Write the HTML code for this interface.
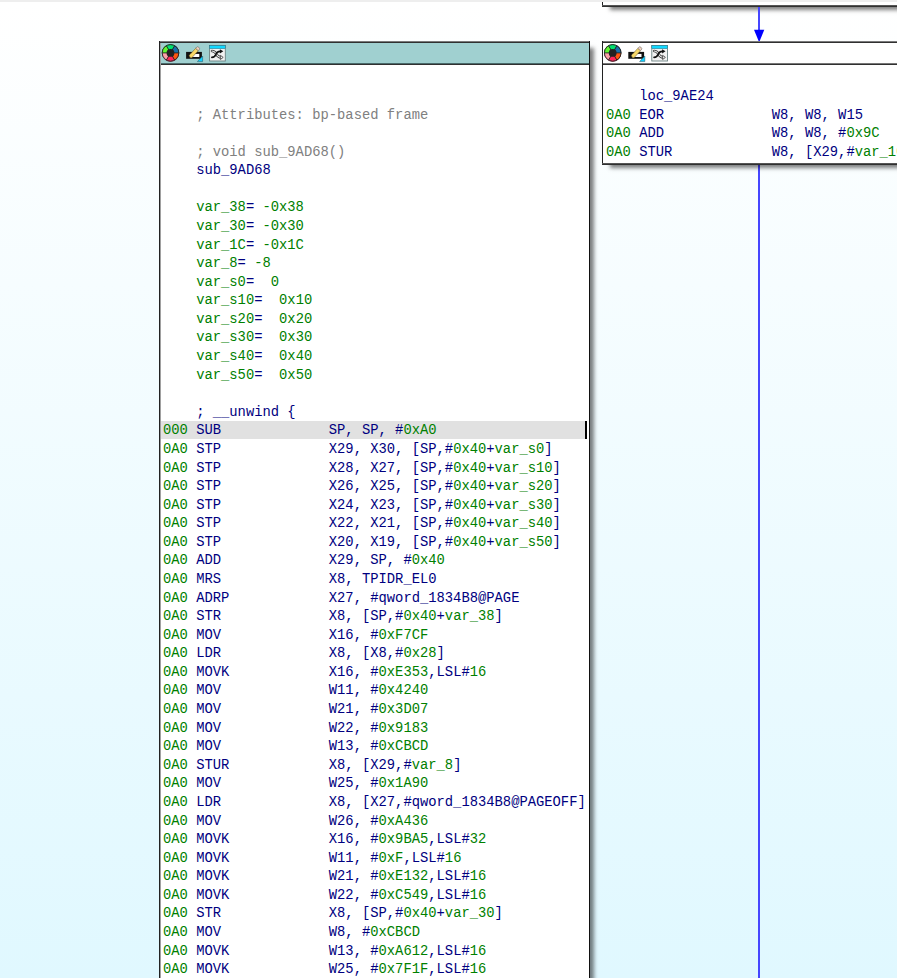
<!DOCTYPE html>
<html><head><meta charset="utf-8">
<style>
html,body{margin:0;padding:0;}
body{width:897px;height:978px;overflow:hidden;position:relative;
 background:linear-gradient(to bottom,#ffffff 0px,#ffffff 2px,#e0f8ff 978px);
 font-family:"Liberation Mono",monospace;}
#strip{position:absolute;left:0;top:0;width:897px;height:2px;background:#eeeeee;z-index:10;}
.box{position:absolute;background:#fff;box-shadow:5.5px 4.5px 4px -2px rgba(0,0,0,0.5);}
.bt{position:absolute;left:0;right:0;top:0;height:1px;background:#7a7a7a;}
.bt2{position:absolute;left:0;right:0;top:1px;height:1px;background:#303030;}
.bl{position:absolute;left:0;top:0;bottom:0;width:1px;background:#222;}
.br{position:absolute;right:0;top:0;bottom:0;width:1px;background:#111;}
.bb{position:absolute;left:0;right:0;bottom:1px;height:1px;background:#555;}
.bb2{position:absolute;left:0;right:0;bottom:0;height:1px;background:#303030;}
.hdr{position:absolute;left:1px;top:2px;right:1px;height:20px;}
.hb{position:absolute;left:0;right:0;top:22px;height:1px;}
.hb2{position:absolute;left:0;right:0;top:23px;height:1px;background:#303030;}
.hdr svg{position:absolute;left:-1px;top:-2px;}
pre{margin:0;position:absolute;font-family:"Liberation Mono",monospace;font-size:13.82px;line-height:18.58px;color:#000080;white-space:pre;}
.g{color:#008000}
.c{color:#808080}
.line{position:absolute;background:#4646ff;}
</style></head><body>
<div id="strip"></div>

<svg width="0" height="0" style="position:absolute">
 <defs>
  <g id="icons">
   <!-- colour wheel -->
   <g transform="translate(11.5,11.9)">
    <circle r="8.7" fill="#222"/>
    <path d="M0 0 L-4.2 -7.3 A8.4 8.4 0 0 1 4.2 -7.3 Z" fill="#00e070"/>
    <path d="M0 0 L4.2 -7.3 A8.4 8.4 0 0 1 8.4 0 Z" fill="#1670a8"/>
    <path d="M0 0 L8.4 0 A8.4 8.4 0 0 1 4.2 7.3 Z" fill="#ff5510"/>
    <path d="M0 0 L4.2 7.3 A8.4 8.4 0 0 1 -4.2 7.3 Z" fill="#ff2458"/>
    <path d="M0 0 L-4.2 7.3 A8.4 8.4 0 0 1 -8.4 0 Z" fill="#ffa0a8"/>
    <path d="M0 0 L-8.4 0 A8.4 8.4 0 0 1 -4.2 -7.3 Z" fill="#60f830"/>
    <path d="M-8.4 0 L8.4 0 M-4.2 -7.3 L4.2 7.3 M4.2 -7.3 L-4.2 7.3" stroke="#222" stroke-width="0.9"/>
    <circle r="8.3" fill="none" stroke="#222" stroke-width="0.9"/>
    <circle r="3.9" fill="#222"/>
   </g>
   <!-- pencil / rename -->
   <path d="M27.1 10.9 H42.9 V17.8 H27.1 Z" fill="#111"/>
   <path d="M31 12.9 H40.3 V16.0 H31 Z" fill="#fff"/>
   <path d="M38.4 20.6 L43.6 20.6 L43.6 15.0 Z" fill="#10d0ff" stroke="#205060" stroke-width="0.5"/>
   <path d="M30.1 14.4 L36.7 7.3 L39.3 9.7 L32.8 16.8 Q31 17.6 30.1 14.4 Z" fill="#f8d868" stroke="#5a4a20" stroke-width="0.5"/>
   <path d="M36.7 7.3 L38.2 5.7 Q39.8 5.4 40.8 7.9 L39.3 9.7 Z" fill="#f2d0c0" stroke="#5a5a50" stroke-width="0.5"/>
   <!-- shuffle -->
   <rect x="50.6" y="4.5" width="15.7" height="15.5" fill="#f2f2f2" stroke="#6a8080" stroke-width="0.9"/>
   <rect x="50.6" y="4.5" width="15.7" height="3.2" fill="#10d8ff" stroke="#307080" stroke-width="0.5"/>
   <path d="M53 10 C55.3 10 56 10.9 57 12.6 C58 14.5 59.2 16.4 62 16.4" fill="none" stroke="#3a3a3a" stroke-width="2.5" stroke-linecap="round"/>
   <path d="M53 10 C55.3 10 56 10.9 57 12.6 C58 14.5 59.2 16.4 62 16.4" fill="none" stroke="#f6f6f6" stroke-width="1.1" stroke-linecap="round"/>
   <path d="M61.4 14.3 L64.2 16.4 L61.4 18.5 Z" fill="#f6f6f6" stroke="#3a3a3a" stroke-width="0.8"/>
   <path d="M52.9 16.3 C54.9 16.3 55.9 16 56.7 13.8 C57.5 11.4 58.6 10.3 61.2 10.3" fill="none" stroke="#111" stroke-width="1.8" stroke-linecap="round"/>
   <path d="M60.9 8.2 L64.3 10.3 L60.9 12.5 Z" fill="#111"/>
  </g>
 </defs>
</svg>

<!-- top partial box -->
<div class="box" style="left:602px;top:-40px;width:400px;height:47px;">
 <div class="bl"></div><div class="bb"></div><div class="bb2"></div>
</div>

<!-- arrow -->
<div class="line" style="left:758px;top:7px;width:2px;height:25px;"></div>
<svg style="position:absolute;left:750px;top:28px" width="20" height="16"><path d="M4 1.7 L14.3 1.7 L9.15 14.2 Z" fill="#0000ff"/></svg>
<div class="line" style="left:758px;top:165px;width:2px;height:820px;"></div>

<!-- main box -->
<div class="box" style="left:159px;top:41px;width:431px;height:1000px;">
 <div class="hdr" style="background:#a0d0d0;border-top:0;"><svg width="80" height="24"><use href="#icons"/></svg></div>
 <div class="hb" style="background:#4a6a6a"></div><div class="hb2"></div>
 <div class="bt"></div><div class="bt2"></div><div class="bl"></div><div class="br"></div>
 <div style="position:absolute;left:1px;top:2px;bottom:0;width:1px;background:#a0a0a0"></div>
</div>

<!-- second box -->
<div class="box" style="left:602px;top:41px;width:400px;height:124px;">
 <div class="hdr" style="background:#ffffff;"><svg width="80" height="24"><use href="#icons" transform="translate(-0.8,0)"/></svg></div>
 <div class="hb" style="background:#777"></div><div class="hb2"></div>
 <div class="bt"></div><div class="bt2"></div><div class="bl"></div><div class="bb"></div><div class="bb2"></div>
</div>

<div style="position:absolute;left:161px;top:421px;width:424px;height:18px;background:#e1e1e1;"></div>
<div style="position:absolute;left:585px;top:421px;width:2px;height:18px;background:#000;"></div>

<pre id="main" style="left:163px;top:68.4px;">


    <span class="c">; Attributes: bp-based frame</span>

    <span class="c">; void sub_9AD68()</span>
    sub_9AD68

    <span class="g">var_38</span>= <span class="g">-0x38</span>
    <span class="g">var_30</span>= <span class="g">-0x30</span>
    <span class="g">var_1C</span>= <span class="g">-0x1C</span>
    <span class="g">var_8</span>= <span class="g">-8</span>
    <span class="g">var_s0</span>=  <span class="g">0</span>
    <span class="g">var_s10</span>=  <span class="g">0x10</span>
    <span class="g">var_s20</span>=  <span class="g">0x20</span>
    <span class="g">var_s30</span>=  <span class="g">0x30</span>
    <span class="g">var_s40</span>=  <span class="g">0x40</span>
    <span class="g">var_s50</span>=  <span class="g">0x50</span>

    ; __unwind {
<span class="g">000</span> SUB             SP, SP, #<span class="g">0xA0</span>
<span class="g">0A0</span> STP             X29, X30, [SP,#<span class="g">0x40</span>+<span class="g">var_s0</span>]
<span class="g">0A0</span> STP             X28, X27, [SP,#<span class="g">0x40</span>+<span class="g">var_s10</span>]
<span class="g">0A0</span> STP             X26, X25, [SP,#<span class="g">0x40</span>+<span class="g">var_s20</span>]
<span class="g">0A0</span> STP             X24, X23, [SP,#<span class="g">0x40</span>+<span class="g">var_s30</span>]
<span class="g">0A0</span> STP             X22, X21, [SP,#<span class="g">0x40</span>+<span class="g">var_s40</span>]
<span class="g">0A0</span> STP             X20, X19, [SP,#<span class="g">0x40</span>+<span class="g">var_s50</span>]
<span class="g">0A0</span> ADD             X29, SP, #<span class="g">0x40</span>
<span class="g">0A0</span> MRS             X8, TPIDR_EL0
<span class="g">0A0</span> ADRP            X27, #qword_1834B8@PAGE
<span class="g">0A0</span> STR             X8, [SP,#<span class="g">0x40</span>+<span class="g">var_38</span>]
<span class="g">0A0</span> MOV             X16, #<span class="g">0xF7CF</span>
<span class="g">0A0</span> LDR             X8, [X8,#<span class="g">0x28</span>]
<span class="g">0A0</span> MOVK            X16, #<span class="g">0xE353</span>,LSL#<span class="g">16</span>
<span class="g">0A0</span> MOV             W11, #<span class="g">0x4240</span>
<span class="g">0A0</span> MOV             W21, #<span class="g">0x3D07</span>
<span class="g">0A0</span> MOV             W22, #<span class="g">0x9183</span>
<span class="g">0A0</span> MOV             W13, #<span class="g">0xCBCD</span>
<span class="g">0A0</span> STUR            X8, [X29,#<span class="g">var_8</span>]
<span class="g">0A0</span> MOV             W25, #<span class="g">0x1A90</span>
<span class="g">0A0</span> LDR             X8, [X27,#qword_1834B8@PAGEOFF]
<span class="g">0A0</span> MOV             W26, #<span class="g">0xA436</span>
<span class="g">0A0</span> MOVK            X16, #<span class="g">0x9BA5</span>,LSL#<span class="g">32</span>
<span class="g">0A0</span> MOVK            W11, #<span class="g">0xF</span>,LSL#<span class="g">16</span>
<span class="g">0A0</span> MOVK            W21, #<span class="g">0xE132</span>,LSL#<span class="g">16</span>
<span class="g">0A0</span> MOVK            W22, #<span class="g">0xC549</span>,LSL#<span class="g">16</span>
<span class="g">0A0</span> STR             X8, [SP,#<span class="g">0x40</span>+<span class="g">var_30</span>]
<span class="g">0A0</span> MOV             W8, #<span class="g">0xCBCD</span>
<span class="g">0A0</span> MOVK            W13, #<span class="g">0xA612</span>,LSL#<span class="g">16</span>
<span class="g">0A0</span> MOVK            W25, #<span class="g">0x7F1F</span>,LSL#<span class="g">16</span>
<span class="g">0A0</span> MOVK            W26, #<span class="g">0x1234</span>,LSL#<span class="g">16</span></pre>

<div style="position:absolute;left:604px;top:66px;width:293px;height:96px;overflow:hidden;">
<pre id="sec" style="left:2px;top:2.4px;">

    loc_9AE24
<span class="g">0A0</span> EOR             W8, W8, W15
<span class="g">0A0</span> ADD             W8, W8, #<span class="g">0x9C</span>
<span class="g">0A0</span> STUR            W8, [X29,#<span class="g">var_1C</span>]</pre>
</div>

</body></html>
